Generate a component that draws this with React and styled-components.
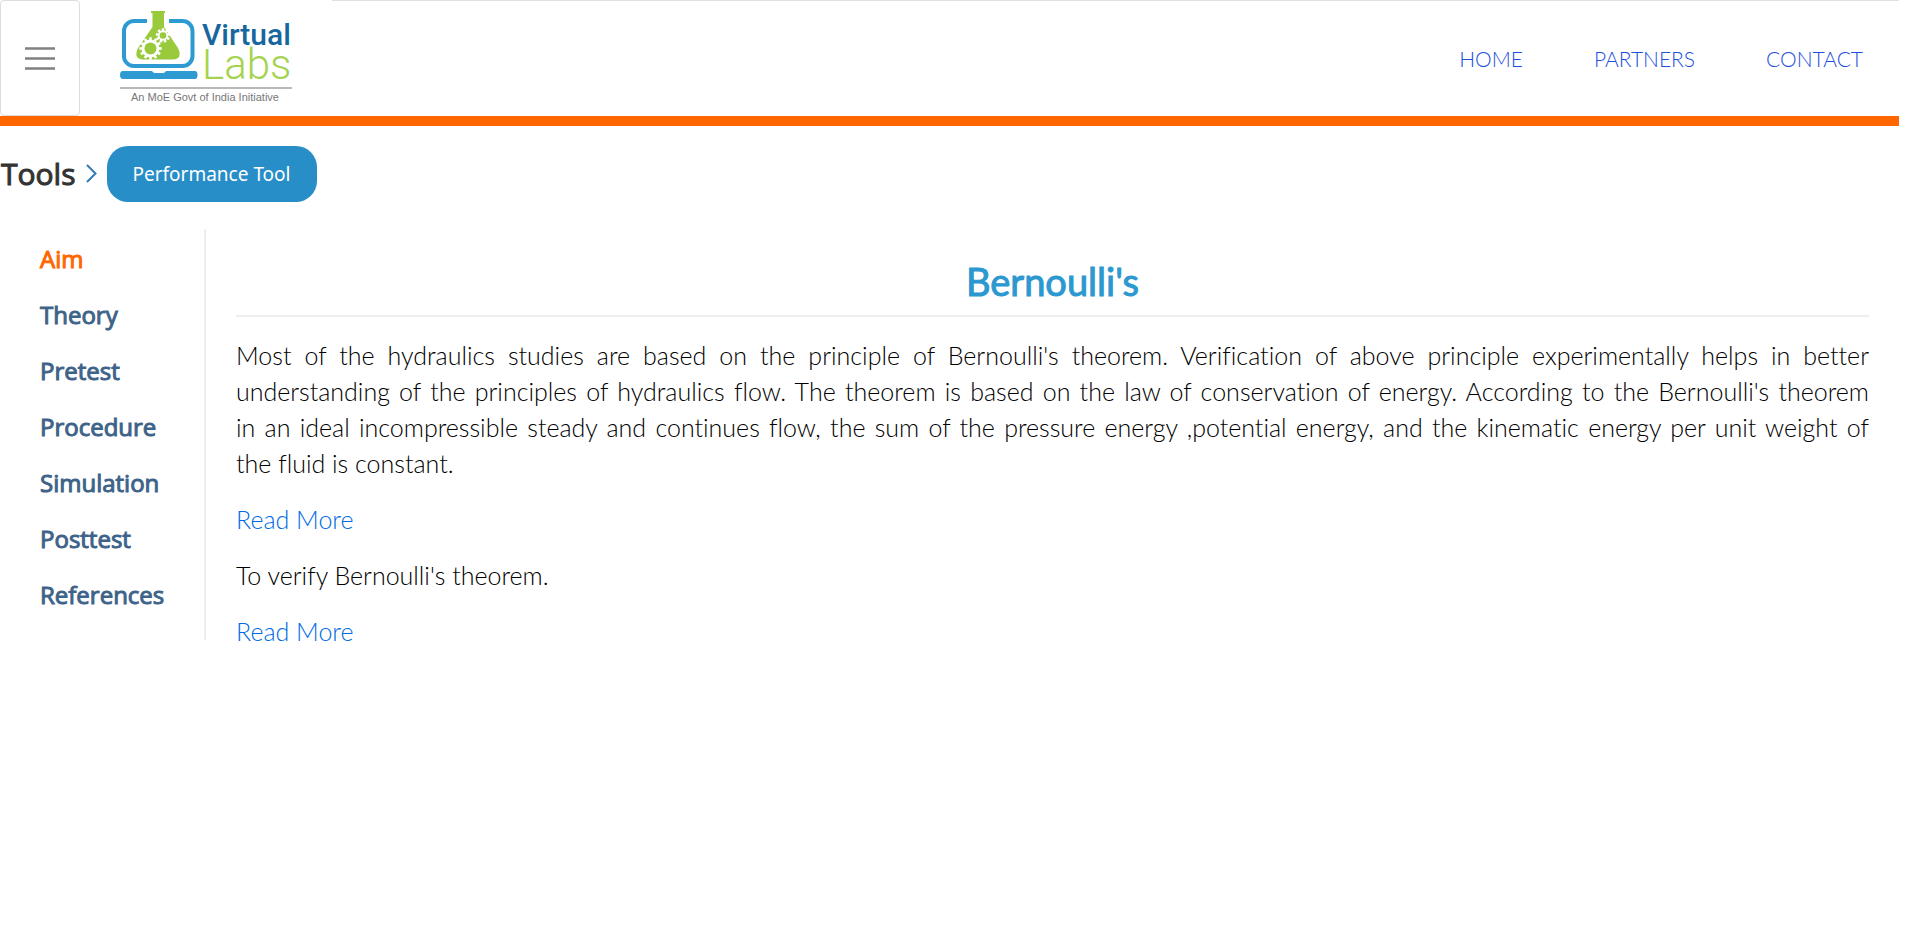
import React from "react";
import styled, { createGlobalStyle } from "styled-components";

const GlobalStyle = createGlobalStyle`
  * { box-sizing: border-box; }
  body {
    margin: 0;
    background: #fff;
    color: #000;
    font-family: Lato, "Open Sans", sans-serif;
    font-weight: 300;
    font-size: 24px;
    line-height: 36px;
    font-variant-ligatures: none;
  }
  a { text-decoration: none; }
`;

const Page = styled.div`
  padding-right: 21px;
`;

const Header = styled.header`
  display: flex;
  align-items: stretch;
  height: 126px;
  border-bottom: 10px solid #ff6600;
`;

const MenuButton = styled.button`
  display: flex;
  align-items: center;
  justify-content: center;
  width: 80px;
  padding: 0;
  border: 1px solid #dcdfe2;
  border-radius: 4px;
  background: #fff;
`;

const LogoLink = styled.a`
  width: 252px;
  padding: 8px 0 0 40px;
`;

const TopNav = styled.nav`
  display: flex;
  flex: 1;
  align-items: center;
  justify-content: flex-end;
  gap: 71px;
  padding: 0 36px 0 0;
  border-top: 1px solid #dee2e6;
`;

const TopLink = styled.a`
  color: #1d4fdc;
  font-size: 21px;
`;

const ToolsBar = styled.div`
  display: flex;
  align-items: center;
  padding: 20px 0 27px 1px;
`;

const ToolsLabel = styled.span`
  font-family: "Open Sans", sans-serif;
  font-weight: 400;
  font-size: 30px;
  color: #333;
  -webkit-text-stroke: 1px #333;
`;

const Chevron = styled.svg`
  margin: 0 9px;
`;

const ToolButton = styled.button`
  height: 56px;
  padding: 0 26px;
  border: 0;
  border-radius: 21px;
  background: #288ec8;
  color: #fff;
  font-family: "Noto Sans", sans-serif;
  font-size: 19px;
`;

const Body = styled.div`
  display: flex;
  align-items: flex-start;
`;

const Sidebar = styled.nav`
  display: flex;
  flex-direction: column;
  flex-shrink: 0;
  gap: 20px;
  width: 206px;
  padding: 12px 0 27px 40px;
  border-right: 2px solid #eee;
`;

const SideLink = styled.a`
  font-family: "Open Sans", sans-serif;
  font-weight: 400;
  color: ${(p) => (p.$active ? "#ff6600" : "#3e6389")};
  -webkit-text-stroke: 1px currentColor;
`;

const Content = styled.main`
  display: flex;
  flex: 1;
  flex-direction: column;
  gap: 20px;
  padding: 30px 30px 0;
  font-size: 25px;
`;

const Title = styled.h1`
  margin: 0;
  padding-bottom: 12px;
  border-bottom: 2px solid #eee;
  color: #2c98d0;
  font-weight: 400;
  font-size: 38px;
  line-height: 44px;
  text-align: center;
  -webkit-text-stroke: 1px currentColor;
`;

const Paragraph = styled.p`
  margin: 0;
  text-align: justify;
`;

const Line = styled.span`
  display: block;
  text-align-last: justify;

  &:last-child {
    text-align-last: left;
  }
`;

const ReadMore = styled.a`
  align-self: flex-start;
  color: #006be0;
`;

const steps = ["Aim", "Theory", "Pretest", "Procedure", "Simulation", "Posttest", "References"];

const aimLines = [
  "Most of the hydraulics studies are based on the principle of Bernoulli's theorem. Verification of above principle experimentally helps in better ",
  "understanding of the principles of hydraulics flow. The theorem is based on the law of conservation of energy. According to the Bernoulli's theorem ",
  "in an ideal incompressible steady and continues flow, the sum of the pressure energy ,potential energy, and the kinematic energy per unit weight of ",
  "the fluid is constant.",
];

function Gear({ cx, cy, r, teeth, hole }) {
  return (
    <g>
      <circle cx={cx} cy={cy} r={r} fill="#fff" />
      {Array.from({ length: teeth }, (_, i) => (
        <rect
          key={i}
          x={cx - 1.3}
          y={cy - r - 2.2}
          width="2.6"
          height="4"
          fill="#fff"
          transform={`rotate(${(360 / teeth) * i} ${cx} ${cy})`}
        />
      ))}
      <circle cx={cx} cy={cy} r={hole} fill="#98ca3c" />
    </g>
  );
}

function Logo() {
  return (
    <svg width="176" height="98" viewBox="0 0 176 98" role="img" aria-label="Virtual Labs">
      <path d="M27 13H14A10 10 0 0 0 4 23V47A10 10 0 0 0 14 58H62A10 10 0 0 0 72.500 48V23A10 10 0 0 0 62 13H49" fill="none" stroke="#2d9ad2" strokeWidth="4" />
      <path d="M31 3H45V5H44V19L58 40Q63 51 53 51.500H23Q13 51 18 40L32.500 19V5H31Z" fill="#98ca3c" />
      <Gear cx={30.500} cy={40.500} r={9} teeth={12} hole={6} />
      <Gear cx={43} cy={27.500} r={5} teeth={9} hole={3.300} />
      <path d="M3 63H32Q33 65 35 65H43Q45 65 46 63H75Q77.500 63 77.500 67T75 71H3Q0 71 0 67T3 63Z" fill="#2d9ad2" />
      <text x="82" y="37" fontFamily="Roboto, sans-serif" fontWeight="500" fontSize="30" fill="#17679e">Virtual</text>
      <text x="82" y="71" fontFamily="Roboto, sans-serif" fontWeight="300" fontSize="42" fill="#a4d34f">Labs</text>
      <path d="M0 80H172" stroke="#b8b8b8" strokeWidth="2" />
      <text x="11" y="93" fontFamily="Liberation Sans, sans-serif" fontWeight="400" fontSize="11" fill="#777">An MoE Govt of India Initiative</text>
    </svg>
  );
}

export default function App() {
  return (
    <Page>
      <GlobalStyle />
      <Header>
        <MenuButton aria-label="Menu">
          <svg width="30" height="24" viewBox="0 0 30 24">
            <path d="M0 2.500H30M0 12.500H30M0 22.500H30" stroke="#808080" strokeWidth="2.500" />
          </svg>
        </MenuButton>
        <LogoLink href="#home"><Logo /></LogoLink>
        <TopNav>
          <TopLink href="#home">HOME</TopLink>
          <TopLink href="#partners">PARTNERS</TopLink>
          <TopLink href="#contact">CONTACT</TopLink>
        </TopNav>
      </Header>
      <ToolsBar>
        <ToolsLabel>Tools</ToolsLabel>
        <Chevron width="13" height="20" viewBox="0 0 13 20" aria-hidden="true">
          <path d="M2 1L10.500 9.500L2 18" fill="none" stroke="#337ab7" strokeWidth="2" />
        </Chevron>
        <ToolButton>Performance Tool</ToolButton>
      </ToolsBar>
      <Body>
        <Sidebar>
          {steps.map((step) => (
            <SideLink key={step} href={`#${step.toLowerCase()}`} $active={step === "Aim"}>{step}</SideLink>
          ))}
        </Sidebar>
        <Content>
          <Title>Bernoulli's</Title>
          <Paragraph>
            {aimLines.map((line) => <Line key={line}>{line}</Line>)}
          </Paragraph>
          <ReadMore href="#theory">Read More</ReadMore>
          <Paragraph>To verify Bernoulli's theorem.</Paragraph>
          <ReadMore href="#theory">Read More</ReadMore>
        </Content>
      </Body>
    </Page>
  );
}
